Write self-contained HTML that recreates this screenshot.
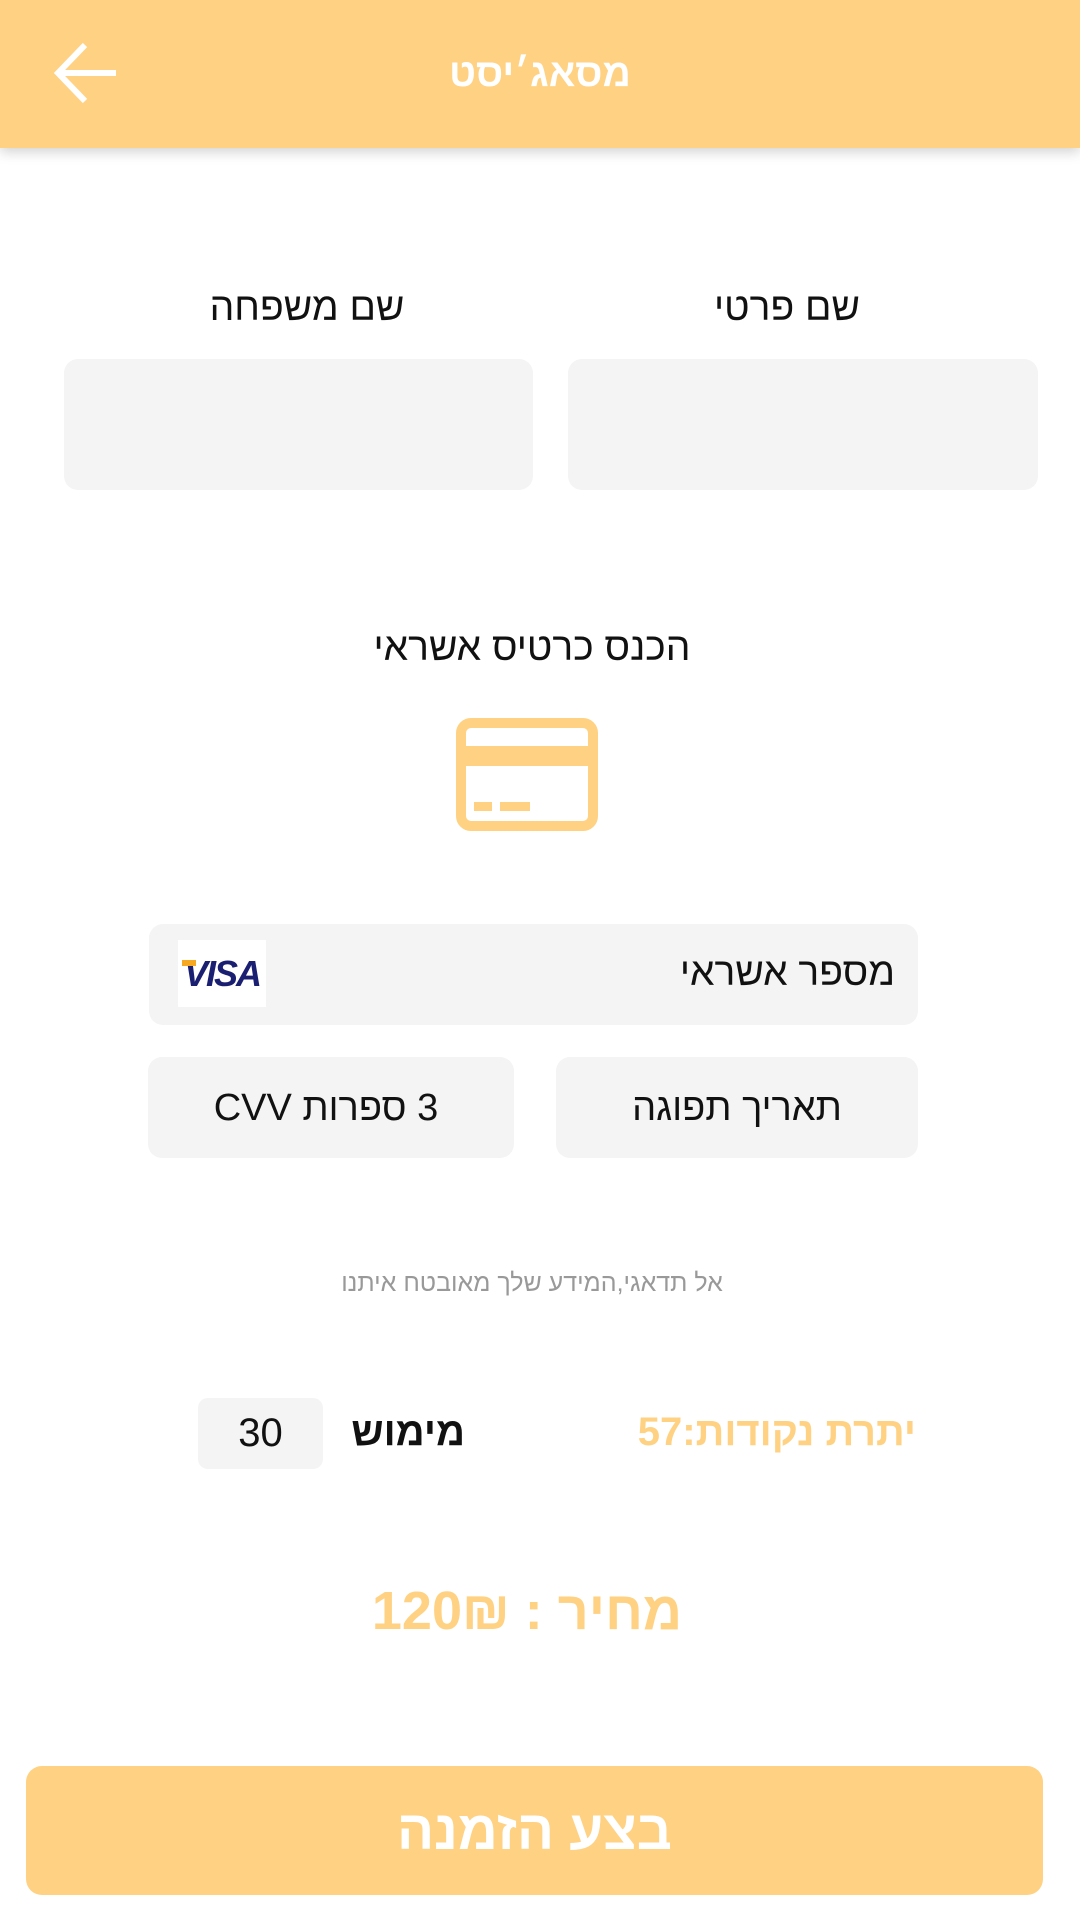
<!DOCTYPE html>
<html><head><meta charset="utf-8"><style>
*{margin:0;padding:0;box-sizing:border-box}
body{width:1080px;height:1920px;background:#fff;position:relative;overflow:hidden;font-family:"Liberation Sans","DejaVu Sans",sans-serif;direction:rtl}
.a{position:absolute}
.hdr{left:0;top:0;width:1080px;height:148px;background:#ffd183;box-shadow:0 4px 12px rgba(0,0,0,.18)}
.t{white-space:nowrap;text-align:center;transform:translateX(-50%)}
.in{background:#f4f4f4;border-radius:14px}
</style></head><body>
<div class="a hdr"></div>
<svg class="a" style="left:50px;top:40px" width="70" height="66" viewBox="0 0 70 66"><path d="M66 33H10M35 5L8 33L35 61" stroke="#fff" stroke-width="6" fill="none"/></svg>
<div class="a t" style="left:540px;top:52px;font-size:39px;font-weight:bold;color:#fff">מסאג׳יסט</div>

<div class="a t" style="left:307px;top:286px;font-size:39px;color:#111">שם משפחה</div>
<div class="a t" style="left:787px;top:286px;font-size:39px;color:#111">שם פרטי</div>
<div class="a in" style="left:64px;top:359px;width:469px;height:131px"></div>
<div class="a in" style="left:568px;top:359px;width:470px;height:131px"></div>

<div class="a t" style="left:532px;top:626px;font-size:39px;color:#111">הכנס כרטיס אשראי</div>
<svg class="a" style="left:456px;top:718px" width="142" height="113" viewBox="0 0 142 113"><rect x="5" y="5" width="132" height="103" rx="10" fill="none" stroke="#ffd183" stroke-width="10"/><rect x="5" y="28" width="132" height="20" fill="#ffd183"/><rect x="18" y="84" width="18" height="9" fill="#ffd183"/><rect x="44" y="84" width="30" height="9" fill="#ffd183"/></svg>

<div class="a in" style="left:149px;top:924px;width:769px;height:101px"></div>
<div class="a" style="right:185px;top:951px;font-size:39px;color:#111;white-space:nowrap">מספר אשראי</div>
<div class="a" style="left:178px;top:940px;width:88px;height:67px;background:#fff;direction:ltr;font:italic bold 36px 'Liberation Sans',sans-serif;color:#1a1f71;text-align:center;line-height:67px;letter-spacing:-2px">VISA<div class="a" style="left:4px;top:20px;width:14px;height:6px;background:#f7a823"></div></div>

<div class="a in" style="left:148px;top:1057px;width:366px;height:101px"></div>
<div class="a in" style="left:556px;top:1057px;width:362px;height:101px"></div>
<div class="a t" style="left:326px;top:1087px;font-size:38px;color:#111">3 ספרות CVV</div>
<div class="a t" style="left:737px;top:1087px;font-size:38px;color:#111">תאריך תפוגה</div>

<div class="a t" style="left:532px;top:1269px;font-size:25px;color:#999">אל תדאגי,המידע שלך מאובטח איתנו</div>

<div class="a" style="right:164px;top:1410px;font-size:40px;font-weight:bold;color:#ffd183;white-space:nowrap">יתרת נקודות:57</div>
<div class="a" style="right:615px;top:1410px;font-size:40px;font-weight:bold;color:#111;white-space:nowrap">מימוש</div>
<div class="a in" style="left:198px;top:1398px;width:125px;height:71px;font-size:40px;color:#111;text-align:center;line-height:71px;border-radius:10px">30</div>

<div class="a t" style="left:527px;top:1580px;font-size:54px;font-weight:bold;color:#ffd183">מחיר : 120₪</div>

<div class="a" style="left:26px;top:1766px;width:1017px;height:129px;background:#ffd183;border-radius:16px;color:#fff;font-size:55px;font-weight:bold;text-align:center;line-height:129px">בצע הזמנה</div>
</body></html>
